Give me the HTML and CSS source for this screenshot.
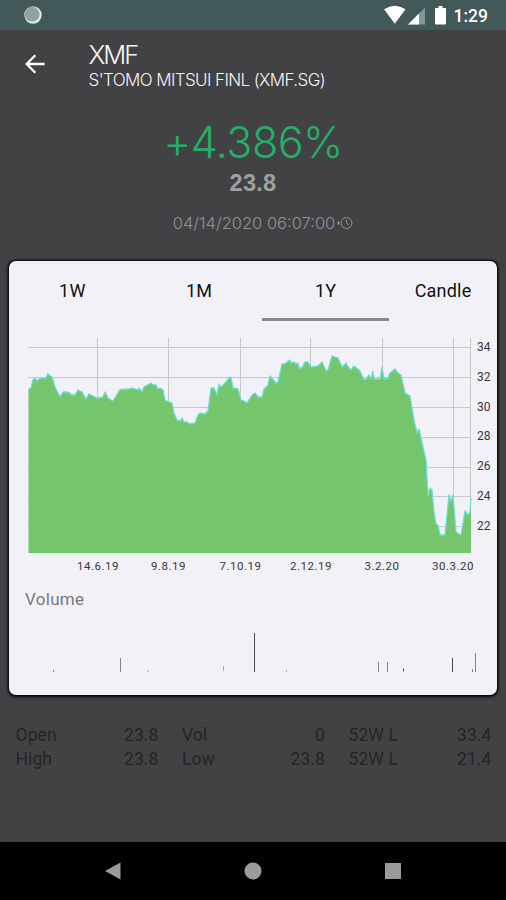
FILE: index.html
```html
<!DOCTYPE html>
<html lang="en">
<head>
<meta charset="utf-8">
<title>XMF</title>
<link rel="stylesheet" href="styles.css">
</head>
<body>
<div class="phone">
  <div class="status">
    <svg class="sync" viewBox="0 0 18 18"><circle cx="9" cy="9" r="8.7" fill="#e2e9e7"/><circle cx="8.2" cy="8.2" r="7.4" fill="#91a29f"/></svg>
    <div class="status-right">
      <svg width="66" height="20" viewBox="0 0 66 20">
        <path d="M-.9 4.2Q9.800-2.800 20.500 4.200L9.800 18.800z" fill="#fff"/>
        <path d="M40 2.500V19.500H23z" fill="#829894"/>
        <path d="M34 8.500V19.500H23z" fill="#fff"/>
        <path d="M53.500 1h4v2h2.500q1 0 1 1v14.500q0 1-1 1h-9q-1 0-1-1V4q0-1 1-1h2.500z" fill="#fff"/>
      </svg>
      <span class="clock">1:29</span>
    </div>
  </div>
  <header class="appbar">
    <svg class="back" viewBox="0 0 20 20"><path d="M19.500 10H2M10.300 1.300L1.700 10l8.600 8.700" fill="none" stroke="#fff" stroke-width="2.300"/></svg>
    <div>
      <h1 class="symbol">XMF</h1>
      <p class="name">S'TOMO MITSUI FINL (XMF.SG)</p>
    </div>
  </header>
  <section class="quote">
    <div class="change">+4.386%</div>
    <div class="price">23.8</div>
    <div class="time"><span>04/14/2020 06:07:00</span><svg width="16" height="14" viewBox="0 0 16 14"><g fill="none" stroke="#929293"><circle cx="9.500" cy="7" r="5.500"/><path d="M9.500 3.500V7l2.500 2M0 7h3M1.500 5v4"/></g></svg></div>
  </section>
  <main class="card">
    <nav class="tabs"><span>1W</span><span>1M</span><span class="active">1Y</span><span class="candle">Candle</span></nav>
    <svg class="chart" viewBox="9 330 488 250">
      <path class="grid" d="M28 347.500H471M28 377.500H471M28 407.500H471M28 437.500H471M28 467.500H471M28 496.500H471M28 526.500H471M97.500 338V553M168.500 338V553M240.500 338V553M310.500 338V553M382.500 338V553M453.500 338V553M470.500 338V553"/>
      <path class="area" d="M28.500 553V389L31 388 33 380 35 378 37 381 39 379 42 378 46 378 48 373.500 49 375 52 377 55 387 60 397 63 392 67 392 70 393 71 395 75 395 78 390 82 392 86 399 89 394 97 398 103 397 105 392 108 398 111 400 113 401 120 389.500 130 389 132 388 138 390 139 388 142 392 144 387 151 383 153 385 156 385 158 389 160 388 163 390 165 400 169 402 172 403 174 413 177 420 180 421 182 418 184 422 187 422 190 424 195 423 198 415 200 413 205 414 208 411 211 388 214 388 217 395 219 384 221 387 225 383 230 377 231 378 233 388 238 389 241 400 244 401 247 403 252 395 255 393 258 397 262 397 264 389 268 385 270 376 276 383 278 382 282 364 285 364 288 361 290 360 291 363 294 362 296 364 298 363 299 368 302 368 305 362 308 362 311 367 318 366 322 362 326 371 328 370 332 356 338 358 342 367 346 363 349 368 351 370 354 366 360 371 364 380 366 379 369 375 371 379 373 371 374 379 380 379 382 367 384 379 388 378 390 373 395 369 398 373 401 375 405 393 410 396 414 420 417 433 419 429 423 447 426 460 428 496 430 488 432 490 434 512 436 524 438 525 440 535 445 535 449 495 451 502 453 495 456 532 461 535 465 511 468 515 470 512 471 498V553z"/>
      <path class="line" d="M28.500 389L31 388 33 380 35 378 37 381 39 379 42 378 46 378 48 373.500 49 375 52 377 55 387 60 397 63 392 67 392 70 393 71 395 75 395 78 390 82 392 86 399 89 394 97 398 103 397 105 392 108 398 111 400 113 401 120 389.500 130 389 132 388 138 390 139 388 142 392 144 387 151 383 153 385 156 385 158 389 160 388 163 390 165 400 169 402 172 403 174 413 177 420 180 421 182 418 184 422 187 422 190 424 195 423 198 415 200 413 205 414 208 411 211 388 214 388 217 395 219 384 221 387 225 383 230 377 231 378 233 388 238 389 241 400 244 401 247 403 252 395 255 393 258 397 262 397 264 389 268 385 270 376 276 383 278 382 282 364 285 364 288 361 290 360 291 363 294 362 296 364 298 363 299 368 302 368 305 362 308 362 311 367 318 366 322 362 326 371 328 370 332 356 338 358 342 367 346 363 349 368 351 370 354 366 360 371 364 380 366 379 369 375 371 379 373 371 374 379 380 379 382 367 384 379 388 378 390 373 395 369 398 373 401 375 405 393 410 396 414 420 417 433 419 429 423 447 426 460 428 496 430 488 432 490 434 512 436 524 438 525 440 535 445 535 449 495 451 502 453 495 456 532 461 535 465 511 468 515 470 512 471 498"/>
      <g class="axis">
        <text x="477" y="350.500">34</text><text x="477" y="380.500">32</text><text x="477" y="410.500">30</text><text x="477" y="440">28</text><text x="477" y="470">26</text><text x="477" y="500">24</text><text x="477" y="530">22</text>
      </g>
      <g class="axis dates">
        <text x="98" y="569.500">14.6.19</text><text x="168.500" y="569.500">9.8.19</text><text x="240.500" y="569.500">7.10.19</text><text x="311" y="569.500">2.12.19</text><text x="382" y="569.500">3.2.20</text><text x="453" y="569.500">30.3.20</text>
      </g>
    </svg>
    <h2 class="volume-title">Volume</h2>
    <svg class="volume" viewBox="9 620 488 60">
      <path stroke="#4b4a4d" d="M254.500 633V672M403.500 668.500V671.500M452.500 658V672"/>
      <path stroke="#858488" d="M53.500 670V672M120.500 658V672M378.500 662V672M387.500 662V672M472.500 669V672M475.500 653V672"/>
      <path stroke="#aaa9ad" d="M148 670V672M223.500 666V671M286.500 670V672"/>
    </svg>
  </main>
  <section class="stats">
    <div class="pair"><span>Open</span><span>23.8</span></div>
    <div class="pair"><span>Vol</span><span>0</span></div>
    <div class="pair"><span>52W L</span><span>33.4</span></div>
    <div class="pair"><span>High</span><span>23.8</span></div>
    <div class="pair"><span>Low</span><span>23.8</span></div>
    <div class="pair"><span>52W L</span><span>21.4</span></div>
  </section>
  <footer class="navbar">
    <svg viewBox="0 0 18 18"><path d="M16.500.5v17L1 9z"/></svg>
    <svg viewBox="0 0 18 18"><circle cx="9" cy="9" r="8.500"/></svg>
    <svg viewBox="0 0 18 18"><path d="M1 1h16v16H1z"/></svg>
  </footer>
</div>
</body>
</html>
```

FILE: styles.css
```css
* { box-sizing: border-box; }
body { margin: 0; background: #424244; font-family: Roboto, sans-serif; }
h1, h2, p { margin: 0; font-weight: 400; }
svg { display: block; flex: none; overflow: visible; }
.phone { width: 506px; height: 900px; display: flex; flex-direction: column; background: #424244; overflow: hidden; }
.status { height: 30px; flex: none; background: #435859; display: flex; justify-content: space-between; padding: 6px 18px 0 24px; }
.sync { width: 18px; height: 18px; }
.status-right { display: flex; gap: 3px; }
.status-right svg { margin-top: -1px; }
.clock { color: #fff; font-size: 17.5px; line-height: 20px; font-weight: 500; letter-spacing: 0; }
.appbar { height: 72px; flex: none; display: flex; padding-left: 25px; color: #f4f4f4; font-family: Inter, sans-serif; }
.back { width: 20px; height: 20px; margin: 24px 43.5px 0 0; }
.symbol { margin-top: 9px; font-size: 25.5px; line-height: 31px; font-weight: 300; letter-spacing: -2px; }
.name { margin-top: 1px; font-size: 17px; line-height: 18px; font-weight: 300; letter-spacing: -.6px; white-space: nowrap; }
.quote { height: 159px; flex: none; display: flex; flex-direction: column; align-items: center; font-family: Inter, sans-serif; }
.change { margin-top: 15px; font-size: 43px; line-height: 50px; font-weight: 300; color: #24ae68; letter-spacing: -.5px; }
.price { margin-top: 3px; font: 700 23.5px/26px "Liberation Sans", sans-serif; color: #a0a0a1; letter-spacing: .3px; }
.time { margin: 17px 0 0 20px; display: flex; align-items: center; gap: 2px; font-size: 16.5px; line-height: 20px; font-weight: 300; color: #929293; white-space: nowrap; }
.card { width: 488px; height: 434px; flex: none; margin-left: 9px; border-radius: 7px; background: #f2f1f7; box-shadow: 0 0 2px 1px #08080a, 0 1px 3px 1px #111; }
.tabs { height: 60px; display: flex; color: #111; font-size: 18px; line-height: 60px; text-align: center; letter-spacing: .2px; }
.tabs span { width: 126.7px; flex: none; }
.tabs .active { border-bottom: 3px solid #88878b; }
.tabs .candle { width: 108px; }
.chart { width: 488px; height: 250px; margin-top: 9px; }
.grid { fill: none; stroke: #c8c7cd; stroke-width: 1; }
.area { fill: #74c56b; }
.line { fill: none; stroke: #69dfd5; stroke-width: 1.3; stroke-linejoin: round; }
.axis { font-size: 12px; fill: #38373a; letter-spacing: .1px; }
.dates { font-size: 11.5px; text-anchor: middle; letter-spacing: .5px; }
.volume-title { margin: 7px 0 0 16px; font-size: 17px; line-height: 24px; color: #7a797d; letter-spacing: .3px; }
.volume { width: 488px; height: 60px; margin-top: 9px; }
.stats { height: 147px; flex: none; padding: 28px 14px 0 15.5px; display: grid; grid-template-columns: 143px 143px 143px; column-gap: 23.5px; grid-auto-rows: 24px; font-size: 17.5px; line-height: 24px; color: #252526; letter-spacing: .1px; }
.pair { display: flex; justify-content: space-between; }
.navbar { height: 58px; flex: none; background: #000; display: flex; justify-content: center; align-items: center; gap: 122px; }
.navbar svg { width: 18px; height: 18px; fill: #9b9b9b; }
```
